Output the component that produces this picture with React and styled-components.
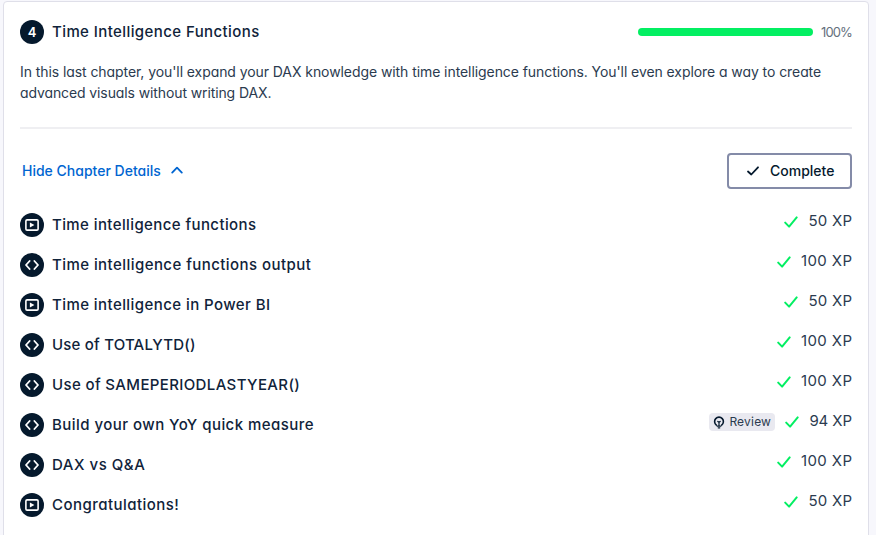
import React from "react";
import styled, { createGlobalStyle } from "styled-components";

const Global = createGlobalStyle`
  * { box-sizing: border-box; }
  html, body { margin: 0; height: 100%; overflow: hidden; }
  body {
    background: #f7f7fc;
    color: #05192d;
    font-family: Inter, "Liberation Sans", sans-serif;
    font-feature-settings: "cv11" 1;
  }
`;

const Card = styled.main`
  margin: 1px 7px 0 3px;
  height: 560px;
  padding: 18px 16px 0;
  background: #fff;
  border: 1px solid #dfdfe9;
  border-radius: 4px;
`;

const Header = styled.header`
  display: flex;
  align-items: center;
  height: 24px;
`;

const Disc = styled.span`
  flex: none;
  display: flex;
  align-items: center;
  justify-content: center;
  width: 24px;
  height: 24px;
  margin: 0 8px 1px 0;
  border-radius: 50%;
  background: #05192d;
  color: #fff;
  font-size: 13px;
  font-weight: 600;
`;

const Title = styled.h4`
  margin: 0;
  font-size: 15px;
  line-height: 24px;
  font-weight: 550;
  color: #10233a;
  white-space: nowrap;
  letter-spacing: ${(p) => p.$track || 0}px;
`;

const Track = styled.div`
  width: 175px;
  height: 8px;
  margin: 0 8px 1px auto;
  border-radius: 4px;
  background: #03ef62;
`;

const Percent = styled.span`
  width: 31px;
  margin-bottom: 1px;
  font-size: 13px;
  line-height: 24px;
  color: #65707d;
  letter-spacing: -0.9px;
`;

const Description = styled.p`
  margin: 17px 0 0;
  font-size: 14px;
  line-height: 21px;
  color: #2b3b4f;
`;

const Line = styled.span`
  display: inline-block;
  white-space: nowrap;
  letter-spacing: ${(p) => p.$track || 0}px;
  margin-right: ${(p) => -(p.$track || 0)}px;
`;

const Divider = styled.hr`
  height: 2px;
  margin: 24px 0;
  border: 0;
  background: #efeff2;
`;

const Actions = styled.div`
  display: flex;
  align-items: center;
  justify-content: space-between;
  height: 36px;
`;

const Toggle = styled.button`
  display: flex;
  align-items: center;
  gap: 10px;
  padding: 0 2px 2px;
  border: 0;
  background: none;
  color: #0065d1;
  font: inherit;
  font-feature-settings: inherit;
  font-size: 14px;
  font-weight: 550;
`;

const Complete = styled.button`
  display: flex;
  align-items: center;
  gap: 11px;
  width: 125px;
  height: 36px;
  padding: 0 16px 1px 18px;
  border: 2px solid #848ba8;
  border-radius: 4px;
  background: #fff;
  color: #05192d;
  font: inherit;
  font-feature-settings: inherit;
  font-size: 14px;
  font-weight: 550;
`;

const List = styled.ul`
  margin: 16px 0 0;
  padding: 0;
  list-style: none;
`;

const Row = styled.li`
  display: flex;
  align-items: center;
  height: 40px;
`;

const Reward = styled.div`
  display: flex;
  align-items: center;
  margin: 0 0 8px auto;
  font-size: 15px;
  line-height: 20px;
  color: #2b3b4f;
`;

const Badge = styled.span`
  display: flex;
  align-items: center;
  gap: 4px;
  width: 66px;
  height: 18px;
  margin: 2px 10px 0 0;
  padding: 0 0 1px 4px;
  border-radius: 4px;
  background: #e9e9f0;
  font-size: 12px;
`;

const Svg = styled.svg`
  display: block;
  flex: none;
  fill: none;
  stroke: currentColor;
  stroke-linecap: round;
  stroke-linejoin: round;
`;

const GreenCheck = styled(Svg)`
  margin: 2px 10px 0 0;
  color: #03ef62;
`;

const VideoIcon = () => (
  <Svg width="14" height="12" viewBox="0 0 14 12" strokeWidth="1.6">
    <rect x="0.9" y="0.9" width="12.2" height="10.2" rx="1.2" />
    <path d="M4.9 3.4v5.2L9.4 6z" fill="currentColor" stroke="none" />
  </Svg>
);

const CodeIcon = () => (
  <Svg width="14" height="12" viewBox="0 0 14 12" strokeWidth="1.8">
    <path d="M4.6 2 1 6l3.6 4M9.4 2 13 6l-3.6 4" />
  </Svg>
);

const Bulb = () => (
  <Svg width="12" height="14" viewBox="0 0 12 14" strokeWidth="1.6" color="#05192d">
    <path d="M3.4 10.1A4.4 4.4 0 1 1 8.6 10.1" />
    <path d="M6 7v4M4.8 6.4 6 7.3l1.2-.9M4.2 11.2h3.6M5.2 12.8h1.6" strokeWidth="1.2" />
  </Svg>
);

const rows = [
  { kind: "video", name: "Time intelligence functions", track: 0.4, xp: "50 XP" },
  { kind: "code", name: "Time intelligence functions output", track: 0.44, xp: "100 XP" },
  { kind: "video", name: "Time intelligence in Power BI", track: 0.43, xp: "50 XP" },
  { kind: "code", name: "Use of TOTALYTD()", track: 0.2, xp: "100 XP" },
  { kind: "code", name: "Use of SAMEPERIODLASTYEAR()", track: 0.37, xp: "100 XP" },
  { kind: "code", name: "Build your own YoY quick measure", track: 0.46, xp: "94 XP", review: true },
  { kind: "code", name: "DAX vs Q&A", track: 0.52, xp: "100 XP" },
  { kind: "video", name: "Congratulations!", track: 0.46, xp: "50 XP" },
];

const xpTrack = { "50 XP": 0.25, "100 XP": 0.4, "94 XP": -0.1 };

export default function App() {
  return (
    <>
      <Global />
      <Card>
        <Header>
          <Disc>4</Disc>
          <Title $track={0.41}>Time Intelligence Functions</Title>
          <Track />
          <Percent>100%</Percent>
        </Header>
        <Description>
          <Line $track={-0.075}>
            In this last chapter, you'll expand your DAX knowledge with time intelligence functions. You'll even explore a way to create
          </Line>{" "}
          <Line $track={-0.11}>advanced visuals without writing DAX.</Line>
        </Description>
        <Divider />
        <Actions>
          <Toggle>
            <Line>Hide Chapter Details</Line>
            <Svg width="12" height="8" viewBox="0 0 12 8" strokeWidth="1.8">
              <path d="M1.2 6.6 6 1.6l4.8 5" />
            </Svg>
          </Toggle>
          <Complete>
            <Svg width="12" height="10" viewBox="0 0 12 10" strokeWidth="1.8">
              <path d="m1 5.5 3.3 3L11 1.3" />
            </Svg>
            <Line>Complete</Line>
          </Complete>
        </Actions>
        <List>
          {rows.map((row) => (
            <Row key={row.name}>
              <Disc>{row.kind === "video" ? <VideoIcon /> : <CodeIcon />}</Disc>
              <Title $track={row.track}>{row.name}</Title>
              <Reward>
                {row.review && (
                  <Badge>
                    <Bulb />
                    <Line $track={0.2}>Review</Line>
                  </Badge>
                )}
                <GreenCheck width="14" height="12" viewBox="0 0 14 12" strokeWidth="2">
                  <path d="m1.2 6.6 3.9 4L12.7 1.4" />
                </GreenCheck>
                <Line $track={xpTrack[row.xp]}>{row.xp}</Line>
              </Reward>
            </Row>
          ))}
        </List>
      </Card>
    </>
  );
}
